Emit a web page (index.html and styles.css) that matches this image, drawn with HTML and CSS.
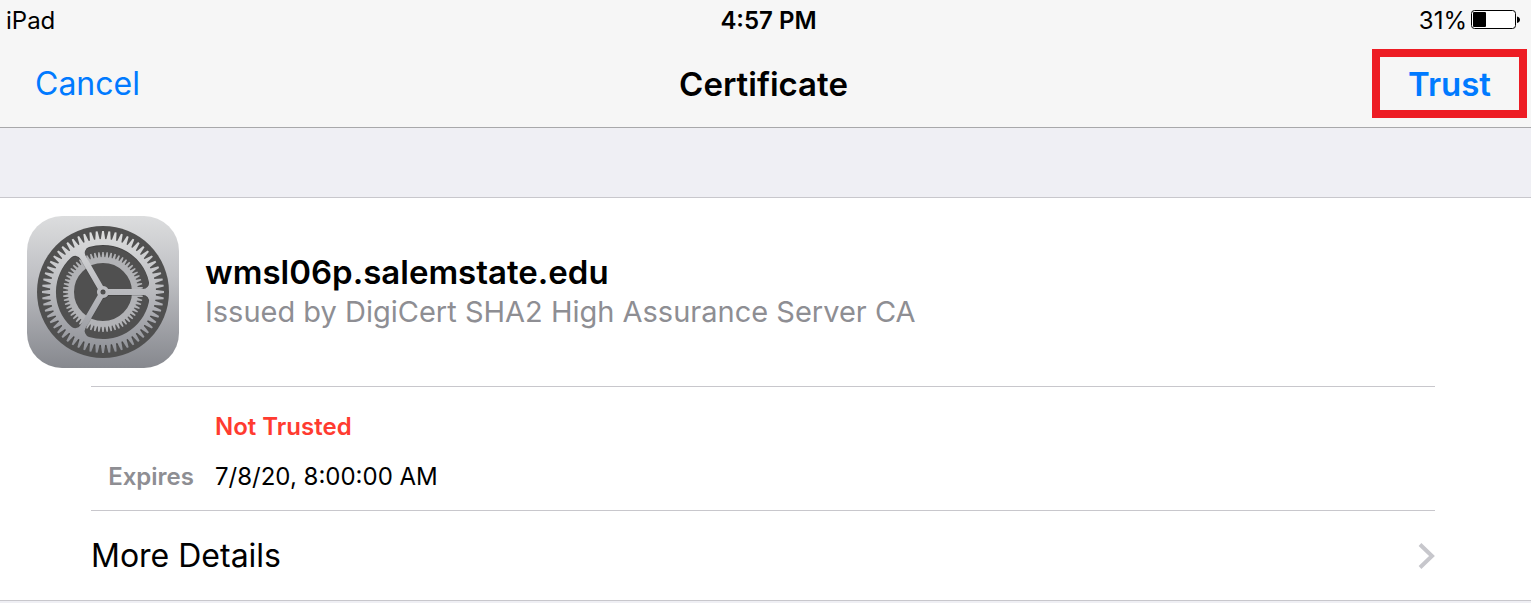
FILE: index.html
```
<!DOCTYPE html>
<html lang="en">
<head>
	<meta charset="UTF-8">
	<title>Certificate</title>
	<link rel="stylesheet" href="styles.css">
</head>
<body>
	<header class="top">
		<div class="status">
			<span>iPad</span>
			<span class="time">4:57 PM</span>
			<div class="power">
				<span>31%</span>
				<svg class="battery" width="49" height="20" viewBox="0 0 49 20" aria-hidden="true">
					<rect x="0.5" y="0.5" width="44" height="18" rx="3" fill="#fff" stroke="#000"/>
					<rect x="2" y="2" width="13" height="15" rx="1"/>
					<path d="M46 6.5C50 7 50 12.5 46 13Z"/>
				</svg>
			</div>
		</div>
		<nav class="nav">
			<button class="cancel" type="button">Cancel</button>
			<h1>Certificate</h1>
			<button class="trust" type="button">Trust</button>
		</nav>
	</header>
	<main class="card">
		<section class="identity">
			<svg class="gear" width="152" height="152" viewBox="-76 -76 152 152" aria-hidden="true">
				<defs>
					<linearGradient id="plate" x1="0" y1="0" x2="0" y2="1">
						<stop offset="0" stop-color="#dcddde"/>
						<stop offset="0.4" stop-color="#bfc0c4"/>
						<stop offset="1" stop-color="#86888e"/>
					</linearGradient>
					<linearGradient id="metal" gradientUnits="userSpaceOnUse" x1="0" y1="-62" x2="0" y2="62">
						<stop offset="0" stop-color="#dddede"/>
						<stop offset="0.5" stop-color="#b9babe"/>
						<stop offset="1" stop-color="#8e9096"/>
					</linearGradient>
					<!-- opening between two spokes -->
					<path id="window" d="M5.2 3H40A6 6 0 0 1 45.9 10.3A47 47 0 0 1 -14 44.9A6 6 0 0 1 -17.4 36.1L0 6A6 6 0 0 0 5.2 3Z"/>
					<mask id="wheel" maskUnits="userSpaceOnUse" x="-64" y="-64" width="128" height="128">
						<rect x="-64" y="-64" width="128" height="128" fill="#fff"/>
						<use href="#window"/>
						<use href="#window" transform="rotate(120)"/>
						<use href="#window" transform="rotate(240)"/>
						<circle r="2.5"/>
					</mask>
					<path id="bigTooth" d="M-2.3 -52L-0.9 -61H0.9L2.3 -52Z"/>
					<g id="bigTeeth">
						<use href="#bigTooth"/>
						<use href="#bigTooth" transform="rotate(6)"/>
						<use href="#bigTooth" transform="rotate(12)"/>
						<use href="#bigTooth" transform="rotate(18)"/>
						<use href="#bigTooth" transform="rotate(24)"/>
					</g>
					<g id="bigQuarter">
						<use href="#bigTeeth"/>
						<use href="#bigTeeth" transform="rotate(30)"/>
						<use href="#bigTeeth" transform="rotate(60)"/>
					</g>
					<path id="smallTooth" d="M-1.5 -34L-0.7 -40H0.7L1.5 -34Z"/>
					<g id="smallTeeth">
						<use href="#smallTooth"/>
						<use href="#smallTooth" transform="rotate(6)"/>
						<use href="#smallTooth" transform="rotate(12)"/>
						<use href="#smallTooth" transform="rotate(18)"/>
						<use href="#smallTooth" transform="rotate(24)"/>
					</g>
					<g id="smallQuarter">
						<use href="#smallTeeth"/>
						<use href="#smallTeeth" transform="rotate(30)"/>
						<use href="#smallTeeth" transform="rotate(60)"/>
					</g>
					<mask id="cogs" maskUnits="userSpaceOnUse" x="-64" y="-64" width="128" height="128">
						<g fill="#fff">
							<circle r="53"/>
							<use href="#bigQuarter"/>
							<use href="#bigQuarter" transform="rotate(90)"/>
							<use href="#bigQuarter" transform="rotate(180)"/>
							<use href="#bigQuarter" transform="rotate(270)"/>
						</g>
					</mask>
				</defs>
				<rect x="-76" y="-76" width="152" height="152" rx="35" fill="url(#plate)"/>
				<circle r="66" fill="#505050"/>
				<g fill="#b2b3b6">
					<use href="#smallQuarter"/>
					<use href="#smallQuarter" transform="rotate(90)"/>
					<use href="#smallQuarter" transform="rotate(180)"/>
					<use href="#smallQuarter" transform="rotate(270)"/>
					<circle r="32" fill="none" stroke="#b2b3b6" stroke-width="6"/>
				</g>
				<!-- shadow under the big wheel -->
				<circle r="54" fill="#000" opacity="0.15" mask="url(#wheel)" transform="translate(0 1)"/>
				<g mask="url(#wheel)">
					<rect x="-64" y="-64" width="128" height="128" fill="url(#metal)" mask="url(#cogs)"/>
				</g>
			</svg>
			<div>
				<h2>wmsl06p.salemstate.edu</h2>
				<p class="issuer">Issued by DigiCert SHA2 High Assurance Server CA</p>
			</div>
		</section>
		<dl class="facts">
			<dt></dt>
			<dd class="bad">Not Trusted</dd>
			<dt>Expires</dt>
			<dd>7/8/20, 8:00:00 AM</dd>
		</dl>
		<a class="more" href="#details">
			More Details
			<svg width="18" height="28" viewBox="0 0 18 28" aria-hidden="true">
				<path d="M3 2.5L15 14L3 25.5" fill="none" stroke="#c7c7cc" stroke-width="4"/>
			</svg>
		</a>
	</main>
</body>
</html>
```
FILE: styles.css
```
*{margin:0;padding:0;box-sizing:border-box;}
body{
	background-color: #efeff4;
	font-family: Inter, "Liberation Sans", sans-serif;
	font-size: 24px;
	color: #000;
}
.top{
	background-color: #f6f6f6;
	border-bottom: 1px solid #a8a8aa;
}
.status,.nav{
	display: grid;
	grid-template-columns: 1fr auto 1fr;
	align-items: center;
}
.status{
	height: 40px;
	padding-left: 6px;
}
.time{font-weight: 600;}
.power{
	display: flex;
	justify-content: flex-end;
	align-items: center;
	gap: 4px;
	padding-right: 11px;
}
.nav{
	height: 87px;
	padding-right: 4px;
}
.nav button{
	background: none;
	font-family: inherit;
	color: #007aff;
	cursor: pointer;
}
.nav .cancel{
	justify-self: start;
	border: 0;
	padding-left: 35px;
	font-size: 32px;
}
.nav .trust{
	justify-self: end;
	height: 69px;
	padding: 0 28px;
	border: 8px solid #ed1c24;
	font-size: 33px;
	font-weight: 600;
}
h1{
	font-size: 33px;
	font-weight: 600;
}
.card{
	margin-top: 69px;
	background-color: #fff;
	border-top: 1px solid #c8c7cc;
	border-bottom: 1px solid #c8c7cc;
}
.identity{
	display: flex;
	align-items: center;
	gap: 26px;
	padding: 18px 27px;
}
.gear{flex: none;}
h2{
	font-size: 33px;
	line-height: 40px;
	font-weight: 600;
}
.issuer{
	font-size: 29px;
	line-height: 40px;
	color: #8e8e93;
}
.facts{
	display: grid;
	grid-template-columns: 103px 1fr;
	column-gap: 21px;
	row-gap: 10px;
	margin: 0 96px 0 91px;
	padding: 20px 0 13px;
	border-top: 1px solid #c8c7cc;
	border-bottom: 1px solid #c8c7cc;
	line-height: 40px;
}
.facts dt{
	text-align: right;
	font-weight: 600;
	color: #8e8e93;
}
.facts .bad{
	font-weight: 600;
	color: #ff3b30;
}
.more{
	display: flex;
	justify-content: space-between;
	align-items: center;
	height: 89px;
	margin: 0 96px 0 91px;
	font-size: 32px;
	color: #000;
	text-decoration: none;
}
```
